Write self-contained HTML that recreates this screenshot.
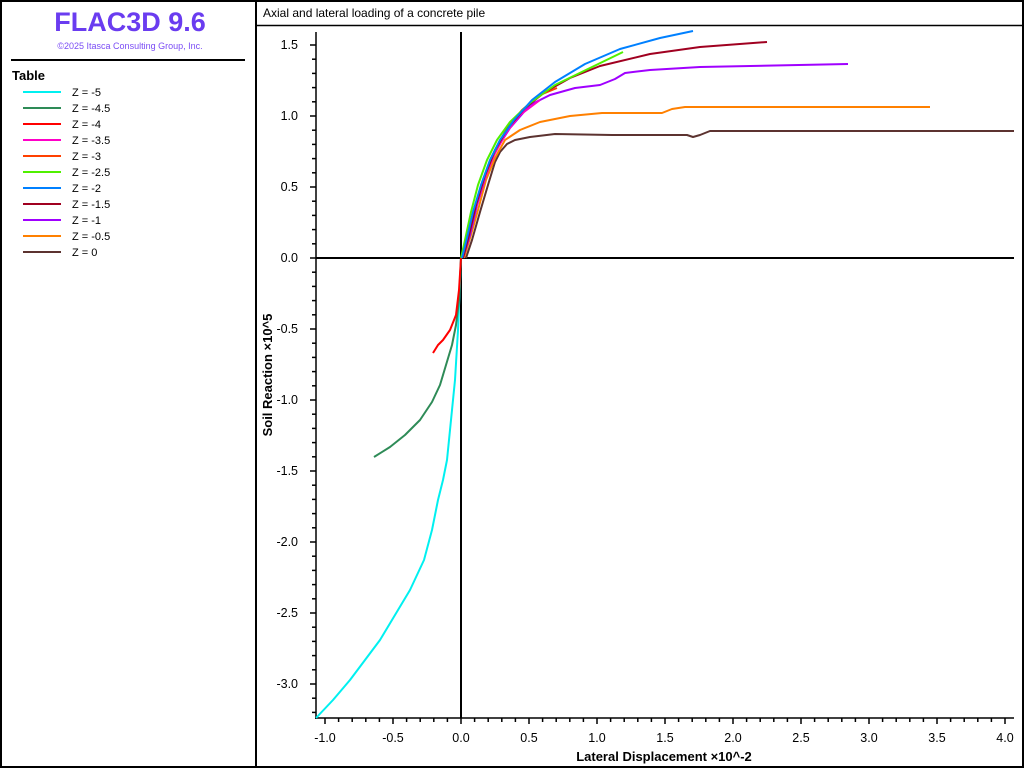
<!DOCTYPE html>
<html><head><meta charset="utf-8"><style>
body{margin:0;width:1024px;height:768px;overflow:hidden;background:#fff;font-family:"Liberation Sans",sans-serif}
</style></head><body>
<svg id="s" width="1024" height="768" viewBox="0 0 1024 768" xmlns="http://www.w3.org/2000/svg" font-family="Liberation Sans, sans-serif">
<rect x="1" y="1" width="1022" height="766" fill="#fff" stroke="#000" stroke-width="2"/>
<line x1="256" y1="0" x2="256" y2="768" stroke="#000" stroke-width="2"/>
<line x1="256" y1="25.5" x2="1024" y2="25.5" stroke="#000" stroke-width="1.5"/>
<text x="130" y="31" text-anchor="middle" font-size="27" font-weight="bold" fill="#6a3cf0">FLAC3D 9.6</text>
<text x="130" y="49" text-anchor="middle" font-size="9" fill="#7a4cf5">©2025 Itasca Consulting Group, Inc.</text>
<line x1="11" y1="60" x2="245" y2="60" stroke="#000" stroke-width="2"/>
<text x="12" y="80" font-size="13" font-weight="bold">Table</text>
<g id="leg" font-size="11"></g>
<text x="263" y="17" font-size="12">Axial and lateral loading of a concrete pile</text>
<g id="ax" stroke="#000" stroke-width="1.5"></g>
<g id="lab" font-size="12.5" fill="#000"></g>
<text x="664" y="761" text-anchor="middle" font-size="13" font-weight="bold">Lateral Displacement ×10^-2</text>
<text transform="translate(272,375) rotate(-90)" text-anchor="middle" font-size="13" font-weight="bold">Soil Reaction ×10^5</text>
<line x1="316" y1="258" x2="1014" y2="258" stroke="#000" stroke-width="2"/>
<line x1="461" y1="32" x2="461" y2="718" stroke="#000" stroke-width="2"/>
<g fill="none" stroke-width="2" stroke-linejoin="round">
<polyline stroke="#00f0f0" points="461,258 458,330 455,380 451,420 447,460 443,480 438,500 432,530 424,560 410,590 395,615 380,640 365,660 350,680 333,700 316,718"/>
<polyline stroke="#2e8b57" points="461,258 459,300 456,325 452,345 446,365 440,385 432,402 420,420 405,435 390,447 374,457"/>
<polyline stroke="#ff0000" points="461,258 459,290 456,315 450,330 443,340 438,345 433,353"/>
<polyline stroke="#5c3330" points="466,258 472,240 480,212 488,185 495,162 500,152 507,144 515,140 530,137 555,134 612,135 687,135 693,137 700,135 710,131 1014,131"/>
<polyline stroke="#ff8000" points="464,258 471,235 478,210 486,180 495,158 505,140 520,130 540,122 570,116 602,113 662,113 672,109 685,107 930,107"/>
<polyline stroke="#a000ff" points="463,258 470,235 477,205 486,175 496,150 510,128 530,105 550,95 575,88 600,85 615,79 625,73 650,70 700,67 848,64"/>
<polyline stroke="#ff00c8" points="462,258 468,238 475,210 484,180 494,155 506,133 520,115 540,100"/>
<polyline stroke="#ff4000" points="462,258 468,238 475,208 484,178 494,153 506,130 522,110 540,95 557,88"/>
<polyline stroke="#a00020" points="463,258 469,235 476,205 485,175 495,150 508,128 525,108 545,92 570,78 600,66 650,54 700,47 767,42"/>
<polyline stroke="#50f000" points="461,258 465,240 471,212 478,185 487,160 497,140 510,122 530,103 555,85 590,68 623,52"/>
<polyline stroke="#0080ff" points="462,258 467,238 473,212 481,185 490,160 500,140 514,120 532,100 555,82 585,64 620,49 660,38 693,31"/>
</g>
</svg>
<script>
var ax=document.getElementById('ax'),lab=document.getElementById('lab'),ns='http://www.w3.org/2000/svg';
function el(p,t,a,txt){var e=document.createElementNS(ns,t);for(var k in a)e.setAttribute(k,a[k]);if(txt)e.textContent=txt;p.appendChild(e);}
el(ax,'line',{x1:316,y1:32,x2:316,y2:719});
el(ax,'line',{x1:315,y1:718,x2:1014,y2:718});
for(var i=-32;i<=15;i++){var y=258-i*14.2;if(y<33||y>717)continue;var maj=i%5==0;el(ax,'line',{x1:maj?310:312,y1:y,x2:316,y2:y});if(maj)el(lab,'text',{x:298,y:y+4,'text-anchor':'end'},(i/10).toFixed(1));}
for(var i=-10;i<=40;i++){var x=461+i*13.6;var maj=i%5==0;el(ax,'line',{x1:x,y1:718,x2:x,y2:maj?724:722});if(maj)el(lab,'text',{x:x,y:742,'text-anchor':'middle'},(i/10).toFixed(1));}
var leg=document.getElementById('leg');
var L=[['#00f0f0','-5'],['#2e8b57','-4.5'],['#ff0000','-4'],['#ff00c8','-3.5'],['#ff4000','-3'],['#50f000','-2.5'],['#0080ff','-2'],['#a00020','-1.5'],['#a000ff','-1'],['#ff8000','-0.5'],['#5c3330','0']];
L.forEach(function(l,i){var y=92+i*16;el(leg,'line',{x1:23,y1:y,x2:61,y2:y,stroke:l[0],'stroke-width':2});el(leg,'text',{x:72,y:y+4},'Z = '+l[1]);});
</script>
</body></html>
